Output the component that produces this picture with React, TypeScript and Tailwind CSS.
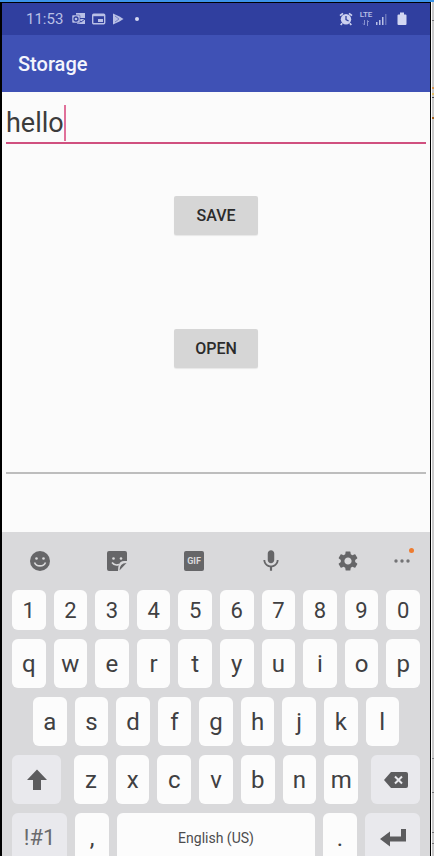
import { useState, type ReactNode } from "react";
import { MdMic, MdSettings } from "react-icons/md";

function StatusBar() {
  return (
    <div className="flex h-8 shrink-0 items-center bg-[#303f9f] pl-6 pr-5 text-[#b9c0e6]">
      <span className="text-[15px] leading-5">11:53</span>
      <svg className="ml-2 h-4 w-4" viewBox="0 0 16 16" fill="none" aria-hidden="true">
        <rect x="5" y="2" width="9" height="5" fill="#b9c0e6" />
        <path d="M7 8h7v5H6z" fill="#b9c0e6" />
        <path d="M6 8l4 3 4-3" stroke="#303f9f" />
        <rect x="1" y="4" width="8" height="8" rx="1" fill="#b9c0e6" stroke="#303f9f" strokeWidth=".5" />
        <circle cx="5" cy="8" r="2" stroke="#303f9f" strokeWidth="1.3" />
      </svg>
      <svg className="ml-1 h-4 w-4" viewBox="0 0 16 16" fill="none" aria-hidden="true">
        <rect x="1.7" y="3.2" width="12" height="9.6" rx="1" stroke="#b9c0e6" strokeWidth="1.4" />
        <path d="M2 4.2h12" stroke="#b9c0e6" strokeWidth="2" />
        <rect x="7" y="8" width="5" height="3" fill="#b9c0e6" />
      </svg>
      <svg className="ml-1 h-4 w-4" viewBox="0 0 16 16" aria-hidden="true">
        <path d="M2 2.5 8.5 5.500 12.500 8 8.500 10.500 2 13.500z" fill="#b9c0e6" />
        <path d="M4 5l4 3-4 3" stroke="#7681c4" strokeWidth="1" fill="none" />
      </svg>
      <span className="ml-2 h-1 w-1 rounded-full bg-[#d5d9f2]" />
      <svg className="ml-auto h-4 w-4" viewBox="0 0 16 16" fill="none" aria-hidden="true">
        <circle cx="8" cy="8.3" r="5.2" fill="#ccd1f0" />
        <path d="M2 4.7 5 2.3M14 4.7 11 2.3M4.2 12.2 2.7 14M11.8 12.2l1.500 1.800" stroke="#ccd1f0" strokeWidth="1.7" />
        <path d="M8 5v3.600l2.600 1.400" stroke="#303f9f" strokeWidth="1.3" />
      </svg>
      <span className="ml-1 flex w-4 flex-col items-center">
        <span className="text-[8px] font-medium leading-2">LTE</span>
        <svg className="h-2 w-2" viewBox="0 0 8 8" fill="none" stroke="#8791cf" aria-hidden="true">
          <path d="M2.5 1v5M1 4.5 2.5 6M5.5 7V1.5M5.5 1.5 7 3" />
        </svg>
      </span>
      <svg className="h-4 w-4" viewBox="0 0 16 16" aria-hidden="true">
        <path d="M2 11h1.500v3H2zM5 9h1.500v5H5zM8 6h1.500v8H8z" fill="#b9c0e6" />
        <path d="M11 3h1.500v11H11z" fill="#6672b8" />
      </svg>
      <svg className="ml-1 h-4 w-4" viewBox="0 0 16 16" aria-hidden="true">
        <path d="M6 1.500h4v2h1.500q1 0 1 1V13q0 1-1 1h-7q-1 0-1-1V4.500q0-1 1-1H6z" fill="#d3d7f2" />
      </svg>
    </div>
  );
}

function ActionButton({ children }: { children: ReactNode }) {
  return (
    <button
      type="button"
      className="h-[39px] w-[84px] rounded-xs bg-[#d6d6d6] text-base font-medium text-[#2b2b2b] shadow-[0_1px_1px_rgba(0,0,0,0.08)]"
    >
      {children}
    </button>
  );
}

function Tool({ label, children }: { label: string; children: ReactNode }) {
  return (
    <button type="button" aria-label={label} className="flex flex-1 items-center justify-center text-[#666668]">
      {children}
    </button>
  );
}

function Toolbar() {
  return (
    <div className="flex h-[58px]">
      <Tool label="Emoji">
        <svg className="h-6 w-6" viewBox="0 0 24 24" fill="none">
          <circle cx="12" cy="12" r="10" fill="currentColor" />
          <circle cx="8.500" cy="9.500" r="1.300" fill="#dadadb" />
          <circle cx="15.500" cy="9.500" r="1.300" fill="#dadadb" />
          <path d="M6.500 13.500c1.800 4.500 9.200 4.500 11 0" stroke="#dadadb" strokeWidth="1.600" />
        </svg>
      </Tool>
      <Tool label="Stickers">
        <svg className="h-6 w-6" viewBox="0 0 24 24" fill="none">
          <path d="M4 2h16q2 0 2 2v8h-3q-4 0-5 3.500-1 2-1 6.500H4q-2 0-2-2V4q0-2 2-2z" fill="currentColor" />
          <path d="M14.500 21.500q0-7.500 7-7.500z" fill="currentColor" />
          <circle cx="8.500" cy="9.500" r="1.300" fill="#dadadb" />
          <circle cx="16" cy="9.500" r="1.300" fill="#dadadb" />
          <path d="M7 13.500q2.500 3.500 7 2" stroke="#dadadb" strokeWidth="1.600" />
        </svg>
      </Tool>
      <Tool label="GIFs">
        <span className="flex h-5 w-5 items-center justify-center rounded-xs bg-[#666668] text-[9px] font-bold leading-3 text-[#dadadb]">
          GIF
        </span>
      </Tool>
      <Tool label="Voice input">
        <MdMic className="h-[26px] w-[26px]" />
      </Tool>
      <Tool label="Keyboard settings">
        <MdSettings className="h-6 w-6" />
      </Tool>
      <button type="button" aria-label="More" className="relative flex w-11 items-center pl-2">
        <svg className="h-1 w-4" viewBox="0 0 16 4" fill="#737375">
          <circle cx="2" cy="2" r="1.700" />
          <circle cx="8" cy="2" r="1.700" />
          <circle cx="14" cy="2" r="1.700" />
        </svg>
        <span className="absolute right-4 top-4 h-[5px] w-[5px] rounded-full bg-[#ee7c30]" />
      </button>
    </div>
  );
}

const keyBase = "flex items-center justify-center rounded-md";

function Keys({ keys, onKey, size = "text-2xl" }: { keys: string; onKey: (k: string) => void; size?: string }) {
  return (
    <>
      {keys.split("").map((k) => (
        <button
          key={k}
          type="button"
          onClick={() => onKey(k)}
          className={`${keyBase} min-w-0 flex-1 bg-[#fcfcfc] text-[#404042] ${size}`}
        >
          {k}
        </button>
      ))}
    </>
  );
}

function Keyboard({ onKey, onDelete }: { onKey: (k: string) => void; onDelete: () => void }) {
  return (
    <div className="h-[324px] shrink-0 overflow-hidden bg-[#d9d9db]">
      <Toolbar />
      <div className="flex flex-col gap-[9px] px-[10px]">
        <div className="flex h-10 gap-2">
          <Keys keys="1234567890" onKey={onKey} size="text-[22px]" />
        </div>
        <div className="flex h-[49px] gap-2">
          <Keys keys="qwertyuiop" onKey={onKey} />
        </div>
        <div className="flex h-[49px] gap-2 px-[21px]">
          <Keys keys="asdfghjkl" onKey={onKey} />
        </div>
        <div className="flex h-[49px] gap-[13px]">
          <button type="button" aria-label="Shift" className={`${keyBase} w-[49px] bg-[#e9e9ed]`}>
            <svg className="h-6 w-6" viewBox="0 0 24 24" fill="#5c5c5e">
              <path d="M12 1.500 22 12h-6v10H8V12H2z" />
            </svg>
          </button>
          <div className="flex flex-1 gap-2">
            <Keys keys="zxcvbnm" onKey={onKey} />
          </div>
          <button type="button" aria-label="Backspace" onClick={onDelete} className={`${keyBase} w-[49px] bg-[#e9e9ed]`}>
            <svg className="h-4 w-6" viewBox="0 0 24 16" fill="none">
              <path d="M7 0h15q2 0 2 2v12q0 2-2 2H7L0 8z" fill="#5c5c5e" />
              <path d="M11 4.500l7 7m0-7-7 7" stroke="#e9e9ed" strokeWidth="2" />
            </svg>
          </button>
        </div>
        <div className="flex h-[49px] gap-2">
          <button type="button" className={`${keyBase} w-[55px] bg-[#e9e9ed] text-[22px] text-[#6a6a6c]`}>
            !#1
          </button>
          <button type="button" onClick={() => onKey(",")} className={`${keyBase} w-[34px] bg-[#fcfcfc] text-2xl text-[#404042]`}>
            ,
          </button>
          <button type="button" onClick={() => onKey(" ")} className={`${keyBase} flex-1 bg-[#fcfcfc] text-sm text-[#4c4c4e]`}>
            English (US)
          </button>
          <button type="button" onClick={() => onKey(".")} className={`${keyBase} w-[34px] bg-[#fcfcfc] text-2xl text-[#404042]`}>
            .
          </button>
          <button type="button" aria-label="Enter" className={`${keyBase} w-[55px] bg-[#e9e9ed]`}>
            <svg className="h-5 w-7" viewBox="0 0 28 20" fill="#5c5c5e">
              <path d="M22 1h5v12.500H11v5L1 11 11 3.500v5h11z" />
            </svg>
          </button>
        </div>
      </div>
    </div>
  );
}

export default function App() {
  const [text, setText] = useState("hello");
  return (
    <div className="flex h-screen flex-col overflow-hidden bg-[#c9c9ca] font-[Roboto,sans-serif]">
      <div className="h-[2px] shrink-0 bg-[#3c94e8]" />
      <div className="flex min-h-0 flex-1">
        <div className="flex min-w-0 flex-1 flex-col border-l-2 border-r border-t border-black bg-[#fbfbfb]">
          <StatusBar />
          <header className="flex h-[57px] shrink-0 items-center bg-[#3f51b5] px-4">
            <h1 className="text-xl font-medium text-[#f4f5fc]">Storage</h1>
          </header>
          <main className="flex min-h-0 flex-1 flex-col items-center px-1">
            <div className="relative mt-1 flex h-12 w-full items-center border-b-2 border-[#d0507f] pt-2">
              <input
                aria-label="Text to save"
                value={text}
                onChange={(e) => setText(e.target.value)}
                className="h-full w-full bg-transparent text-[27px] text-[#3c3c3c] outline-none"
              />
              <span className="pointer-events-none absolute inset-0 flex items-center pt-2" aria-hidden="true">
                <span className="invisible whitespace-pre text-[27px]">{text}</span>
                <span className="h-9 w-[2px] bg-[#e0709a]" />
              </span>
            </div>
            <div className="mt-[52px] flex flex-col gap-[94px]">
              <ActionButton>SAVE</ActionButton>
              <ActionButton>OPEN</ActionButton>
            </div>
            <input
              aria-label="Stored text"
              className="mt-[58px] h-12 w-full border-b-2 border-[#bdbdbd] bg-transparent text-[27px] outline-none"
            />
          </main>
          <Keyboard onKey={(k) => setText(text + k)} onDelete={() => setText(text.slice(0, -1))} />
        </div>
        <div className="flex w-[3px] flex-col border-l border-white">
          <span className="mt-[18px] h-px bg-[#77777a]" />
          <span className="mt-[66px] h-[2px] bg-[#dd9a55]" />
          <span className="mt-[4px] h-[2px] bg-[#e3bd68]" />
          <span className="mt-[2px] h-px bg-[#4c4c50]" />
          <span className="mt-[19px] h-[2px] bg-[#a96522]" />
          <span className="mt-auto h-px bg-[#88888b]" />
          <span className="mt-[33px] h-px bg-[#77777a]" />
          <span className="mt-[39px] h-px bg-[#77777a]" />
          <span className="mb-[12px] mt-[10px] h-px bg-[#77777a]" />
        </div>
      </div>
    </div>
  );
}
